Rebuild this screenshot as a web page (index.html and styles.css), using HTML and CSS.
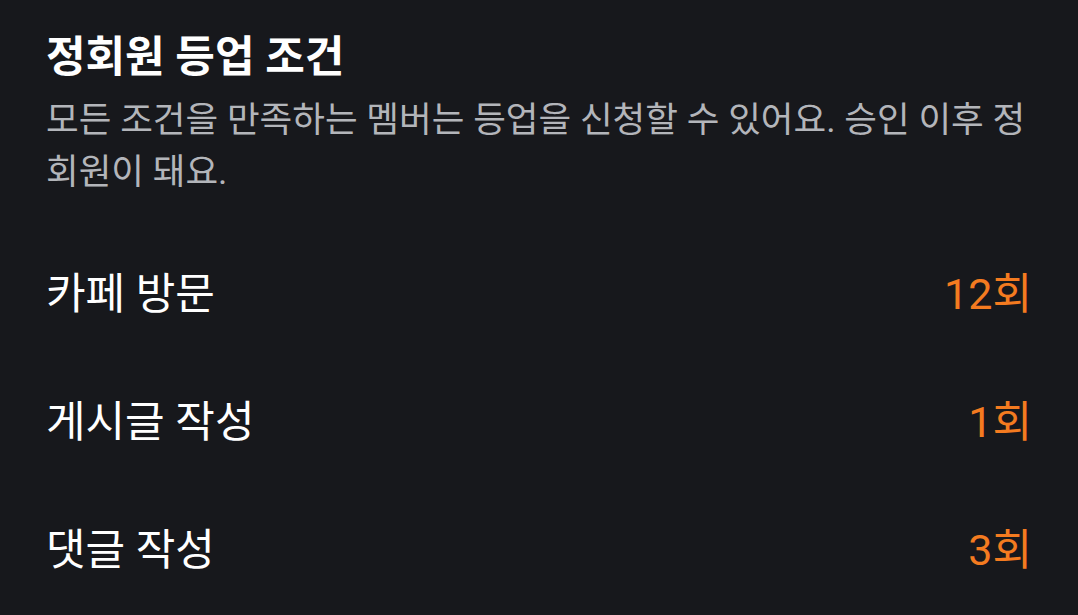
FILE: index.html
```html
<!DOCTYPE html>
<html lang="ko">
<head>
<meta charset="utf-8">
<link rel="stylesheet" href="styles.css">
</head>
<body>
<main class="panel">
  <h1 class="title">정회원 등업 조건</h1>
  <p class="desc">모든 조건을 만족하는 멤버는 등업을 신청할 수 있어요. 승인 이후 정회원이 돼요.</p>
  <ul class="conditions">
    <li class="row"><span class="label">카페 방문</span><span class="value">12회</span></li>
    <li class="row"><span class="label">게시글 작성</span><span class="value">1회</span></li>
    <li class="row"><span class="label">댓글 작성</span><span class="value">3회</span></li>
  </ul>
</main>
</body>
</html>
```
FILE: styles.css
```css
html, body {
  margin: 0;
  padding: 0;
  background: #17181c;
}
body {
  font-family: Roboto, "Noto Sans CJK KR", "Noto Sans", sans-serif;
  color: #ffffff;
  width: 1078px;
  height: 615px;
  overflow: hidden;
}
.panel {
  padding: 29px 46px 0 46px;
  display: flex;
  flex-direction: column;
}
.title {
  margin: 0;
  font-size: 43px;
  font-weight: 700;
  line-height: 56px;
  color: #ffffff;
}
.desc {
  margin: 9px 0 0 0;
  font-size: 35.5px;
  line-height: 52px;
  color: #b3b5ba;
}
.conditions {
  list-style: none;
  margin: 28px 0 0 0;
  padding: 0;
  display: flex;
  flex-direction: column;
}
.row {
  height: 128px;
  display: flex;
  align-items: center;
  justify-content: space-between;
  font-size: 43px;
}
.label {
  color: #ffffff;
}
.value {
  color: #f47b20;
}
```
